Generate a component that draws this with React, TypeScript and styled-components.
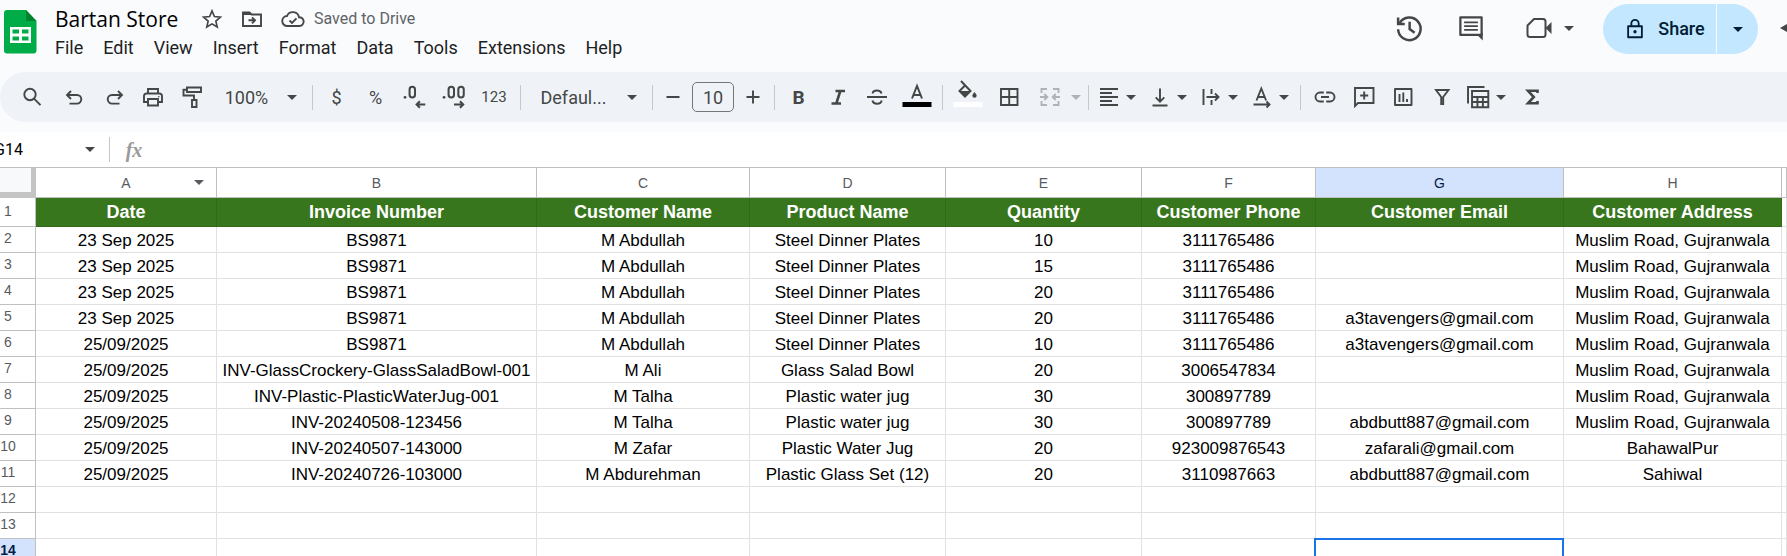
import React, { ReactNode } from 'react';
import styled, { createGlobalStyle, css } from 'styled-components';

const GlobalStyle = createGlobalStyle`
  *, *::before, *::after { box-sizing: border-box; }
  html, body { margin: 0; padding: 0; background: #f9fbfd; }
  body { overflow: hidden; font-family: Roboto, "Liberation Sans", sans-serif; color: #1f1f1f; }
  button, input { font: inherit; color: inherit; }
`;

const INK = '#444746';

/* ---------- layout ---------- */

const Page = styled.div`
  min-height: 100vh;
  max-height: 100vh;
  overflow: hidden;
  background: #f9fbfd;
`;

const Header = styled.header`
  display: flex;
  align-items: flex-start;
  height: 72px;
  padding-left: 4px;
  overflow: hidden;
`;

const LogoLink = styled.a`
  display: flex;
  padding-top: 10px;
`;

const TitleBlock = styled.div`
  margin-left: 18px;
`;

const TitleRow = styled.div`
  display: flex;
  align-items: center;
  height: 38px;
`;

const Title = styled.h1`
  margin: 0;
  min-width: 124px;
  font-size: 21px;
  line-height: 28px;
  font-weight: 400;
  font-family: "Open Sans", sans-serif;
  color: #000;
`;

const TitleIcons = styled.div`
  display: flex;
  gap: 17px;
  margin-left: 22px;
  color: ${INK};
`;

const Saved = styled.span`
  margin-left: 9px;
  font-size: 16px;
  line-height: 20px;
  color: #5f6368;
`;

const MenuBar = styled.nav`
  display: flex;
  gap: 20px;
`;

const MenuButton = styled.button`
  padding: 0;
  border: 0;
  background: none;
  font-size: 18px;
  line-height: 20px;
  color: #1f1f1f;
`;

const HeaderActions = styled.div`
  display: flex;
  align-items: center;
  margin-left: auto;
  height: 56px;
  flex: none;
  color: ${INK};
`;

const PlainButton = styled.button<{ $w?: number }>`
  display: flex;
  align-items: center;
  justify-content: center;
  flex: none;
  width: ${(p) => (p.$w ? `${p.$w}px` : 'auto')};
  padding: 0;
  border: 0;
  background: none;
`;

const ShareGroup = styled.div`
  display: flex;
  height: 50px;
  margin: 2px 22px 0 29px;
  border-radius: 25px;
  overflow: hidden;
  gap: 1px;
`;

const ShareButton = styled.button<{ $w: number; $lead?: number }>`
  display: flex;
  align-items: center;
  justify-content: center;
  gap: 12px;
  width: ${(p) => p.$w}px;
  padding: 0 0 0 ${(p) => p.$lead ?? 0}px;
  border: 0;
  background: #c2e7ff;
  color: #001d35;
  font-size: 18px;
  font-weight: 500;
  line-height: 24px;
`;

const Toolbar = styled.div`
  display: flex;
  align-items: center;
  height: 50px;
  padding-left: 12px;
  border-radius: 25px 0 0 25px;
  background: #eff3f8;
  color: ${INK};
  overflow: hidden;
`;

const ToolGroup = styled.div`
  display: flex;
  flex: none;
  gap: 7px;
`;

const SplitTool = styled.div`
  display: flex;
`;

const Tool = styled.button<{ $w?: number; $size?: number; $weight?: number; $faded?: boolean }>`
  display: flex;
  align-items: center;
  justify-content: center;
  flex: none;
  width: ${(p) => p.$w ?? 39}px;
  height: 38px;
  padding: 0;
  border: 0;
  background: none;
  color: ${(p) => (p.$faded ? '#b0b3b5' : INK)};
  font-size: ${(p) => p.$size ?? 18}px;
  font-weight: ${(p) => p.$weight ?? 400};
`;

const Divider = styled.span<{ $roomy?: boolean }>`
  flex: none;
  width: 1px;
  height: 25px;
  margin: 0 4px 0 ${(p) => (p.$roomy ? 10 : 5)}px;
  background: #c7c7c7;
`;

const SizeInput = styled.input`
  flex: none;
  width: 42px;
  height: 30px;
  margin: 0 3px;
  padding: 0;
  border: 1px solid #747775;
  border-radius: 5px;
  background: none;
  text-align: center;
  font-size: 18px;
  color: ${INK};
`;

const FormulaBar = styled.div`
  display: flex;
  align-items: center;
  height: 36px;
  margin-top: 10px;
  background: #fff;
  border-bottom: 1px solid #c0c0c0;
  color: ${INK};
`;

const NameBox = styled.input`
  width: 82px;
  margin-left: -6px;
  padding: 0;
  border: 0;
  background: none;
  font-size: 16px;
  color: #000;
`;

const FxLabel = styled.label`
  width: 40px;
  text-align: center;
  font-family: "Liberation Serif", serif;
  font-style: italic;
  font-weight: 700;
  font-size: 20px;
  line-height: 24px;
  color: #9a9a9a;
`;

const FormulaInput = styled.input`
  flex: 1;
  min-width: 0;
  border: 0;
  background: none;
`;

/* ---------- sheet ---------- */

const Sheet = styled.table`
  width: 100%;
  table-layout: fixed;
  border-collapse: separate;
  border-spacing: 0;
  background: #fff;
  font-family: "Liberation Sans", Arial, sans-serif;
`;

const Col = styled.col<{ $w?: number }>`
  width: ${(p) => (p.$w ? `${p.$w}px` : 'auto')};
`;

const Corner = styled.td`
  height: 30px;
  padding: 0;
  background: #f8f9fa;
  border-right: 5px solid #c4c4c4;
  border-bottom: 6px solid #c4c4c4;
`;

const ColumnHead = styled.th<{ $active?: boolean }>`
  position: relative;
  height: 30px;
  padding: 0;
  border-right: 1px solid #c0c0c0;
  border-bottom: 1px solid #c0c0c0;
  background: ${(p) => (p.$active ? '#d3e3fd' : '#fff')};
  color: ${(p) => (p.$active ? '#041e49' : '#575b5f')};
  font-size: 14px;
  font-weight: 400;
`;

const ColumnMenu = styled.button`
  position: absolute;
  top: 12px;
  right: 12px;
  display: flex;
  padding: 0;
  border: 0;
  background: none;
`;

const RowHead = styled.th<{ $active?: boolean }>`
  height: 26px;
  padding: 0 19px 3px 0;
  border-right: 1px solid #c0c0c0;
  border-bottom: 1px solid #c0c0c0;
  background: ${(p) => (p.$active ? '#d3e3fd' : '#fff')};
  color: ${(p) => (p.$active ? '#041e49' : '#575b5f')};
  font-size: 14px;
  line-height: 20px;
  font-weight: ${(p) => (p.$active ? 700 : 400)};
  text-align: center;
  white-space: nowrap;
`;

const Cell = styled.td<{ $head?: boolean; $selected?: boolean }>`
  height: 26px;
  padding: 2px 0 0;
  border-right: 1px solid #e1e1e1;
  border-bottom: 1px solid #e1e1e1;
  color: #000;
  font-size: 17px;
  line-height: 20px;
  text-align: center;
  white-space: nowrap;
  ${(p) =>
    p.$head &&
    css`
      height: 29px;
      padding: 0;
      border-color: #316a1b;
      background: #38761d;
      color: #fff;
      font-size: 18px;
      font-weight: 700;
    `}
  ${(p) =>
    p.$selected &&
    css`
      border-right-color: #1a73e8;
      box-shadow: -2px -1px 0 #1a73e8, 0 -1px 0 #1a73e8, inset -1px 1px 0 #1a73e8;
    `}
`;

/* ---------- icons ---------- */

const Svg = ({ size = 24, children, w = 2 }: { size?: number; children: ReactNode; w?: number }) => (
  <svg width={size} height={size} viewBox="0 0 24 24" fill="none" stroke="currentColor" strokeWidth={w} aria-hidden="true">
    {children}
  </svg>
);

const Caret = () => (
  <svg width="10" height="5" viewBox="0 0 10 5" fill="currentColor" aria-hidden="true">
    <path d="M0 0h10L5 5z" />
  </svg>
);

const SheetsLogo = () => (
  <svg width="33" height="44" viewBox="0 0 33 44" aria-hidden="true">
    <path d="M3 0h19l10.500 11v29.500a3 3 0 0 1-3 3H3a3 3 0 0 1-3-3V3a3 3 0 0 1 3-3z" fill="#00ac47" />
    <path d="M22 0l10.500 11H22z" fill="#00832d" />
    <path d="M6 17h21v16H6zM8.500 19.500v4H15v-4zM18 19.500v4h6.500v-4zM8.500 26.500v4H15v-4zM18 26.500v4h6.500v-4z" fill="#fff" fillRule="evenodd" />
  </svg>
);

const icons = {
  star: <Svg size={22} w={1.8}><path d="M12 3.200l2.600 6.100 6.600.6-5 4.400 1.500 6.500-5.700-3.500-5.700 3.500 1.500-6.500-5-4.400 6.600-.6z" /></Svg>,
  move: <Svg w={1.9}><path d="M3 5.500h6.500l2 2H21v11.500H3z" /><path d="M3 5h7l2 3H3z" fill="currentColor" stroke="none" /><path d="M8.500 13.300h6M12 10.300l3 3-3 3" /></Svg>,
  cloud: <Svg w={1.9}><path d="M6.500 19a5 5 0 0 1-.5-10A6.300 6.300 0 0 1 18 10.200 4.400 4.400 0 0 1 18.500 19z" /><path d="M8.500 13.500l2.500 2.500 4.500-4.700" /></Svg>,
  history: <Svg size={30}><path d="M4.600 8A9 9 0 1 1 3.300 13" /><path d="M3.300 3.500v5.300h5.300" /><path d="M12.500 7v5.800l4 3" /></Svg>,
  comment: <Svg size={30} w={1.8}><path d="M3.500 3.500h17v14h-17z" strokeLinejoin="round" /><path d="M21.400 16v6l-4-4z" fill="currentColor" stroke="none" /><path d="M6.500 7.500h11M6.500 10.500h11M6.500 13.500h11" strokeWidth="1.500" /></Svg>,
  search: <Svg w={1.9}><circle cx="10" cy="9.500" r="5.700" /><path d="M14 13.700l6.500 6.500" /></Svg>,
  undo: <Svg w={1.9}><path d="M9 6L5 10l4 4M5.500 10h9.500a4.300 4.300 0 0 1 0 8.600H7.500" /></Svg>,
  redo: <Svg w={1.9}><path d="M15 6l4 4-4 4M18.500 10H9a4.300 4.300 0 0 0 0 8.600h7.500" /></Svg>,
  print: <Svg w={1.9}><path d="M7 8.500V4h10v4.500" /><path d="M7 17H3V11a2.500 2.500 0 0 1 2.500-2.500h13A2.500 2.500 0 0 1 21 11v6h-4" /><path d="M7 14h10v6.500H7z" /><circle cx="17.800" cy="11.700" r=".8" fill="currentColor" stroke="none" /></Svg>,
  roller: <Svg w={1.9}><path d="M7 2.500h14V7H7z" /><path d="M7 4.700H3.500v5.800H14V15" /><path d="M12 15h4.500v7H12z" /></Svg>,
  decDown: <Svg size={26} w={1.9}><path d="M21.500 19h-8M16.500 16l-3 3 3 3" /><rect x="7" y="2.500" width="5" height="10" rx="2.500" /><circle cx="2.800" cy="12.300" r="1.300" fill="currentColor" stroke="none" /></Svg>,
  decUp: <Svg size={26} w={1.9}><path d="M12 19h8M17.500 16l3 3-3 3" /><rect x="7" y="2.500" width="5" height="10" rx="2.500" /><rect x="16" y="2.500" width="5" height="10" rx="2.500" /><circle cx="2.800" cy="12.300" r="1.300" fill="currentColor" stroke="none" /></Svg>,
  minus: <Svg w={1.9}><path d="M5.500 12h13" /></Svg>,
  plus: <Svg w={1.9}><path d="M5.500 12h13M12 5.500v13" /></Svg>,
  italic: <Svg w={2.6}><path d="M9.500 6H19M5.500 18.500H15M14.300 6l-4 12.500" /></Svg>,
  strike: <Svg><path d="M2 12h20" /><path d="M16.500 8.500c-.5-2-2-3-4.500-3s-4.300 1.200-4.300 3M7.500 15.500c.4 2.200 2 3.200 4.600 3.200s4.600-1.200 4.400-3.200" /></Svg>,
  borders: <Svg w={1.9}><path d="M4 4h16.500v16H4zM12.200 4v16M4 12h16.500" /></Svg>,
  merge: <Svg w={1.9}><path d="M9 4H3.500v4M15 4h5.500v4M9 20H3.500v-4M15 20h5.500v-4" /><path d="M2 12h7M6.300 9L9.300 12l-3 3M22 12h-7M17.700 9L14.700 12l3 3" /></Svg>,
  align: <Svg w={1.9}><path d="M3 4h18M3 8h12M3 12h18M3 16h12M3 20h18" /></Svg>,
  valign: <Svg w={1.9}><path d="M4.500 20.500h15M12 3.500v13M7.700 12.300L12 16.600l4.300-4.300" /></Svg>,
  wrap: <Svg w={1.9}><path d="M4.500 4v16M12.500 4v5M12.500 15v5M7.500 12h11M16 8.500l3.500 3.500-3.500 3.500" /></Svg>,
  rotate: <Svg w={1.9}><path d="M6.500 15.500l4.800-12 4.800 12M8 12h6.500M3.500 19.500h15M16.500 16.500l3 3-3 3" /></Svg>,
  link: <Svg w={1.9}><path d="M10.800 7.500H7a4.500 4.500 0 0 0 0 9h3.800M13.200 7.500H17a4.500 4.500 0 0 1 0 9h-3.800M8 12h8" /></Svg>,
  addComment: <Svg w={1.9}><path d="M3 21V3h18.500v15H6z" /><path d="M12.200 6.500v8M8.200 10.500h8" /></Svg>,
  chart: <Svg w={1.9}><path d="M4 4h16.500v16H4z" strokeLinejoin="round" /><path d="M8.500 9v8M12.300 7.500V17M16 14v3" /></Svg>,
  filter: <Svg w={1.9}><path d="M6 5h12.500L13.200 12v7h-2v-7z" /></Svg>,
  tableViews: <Svg size={26} w={1.8}><path d="M2.800 18V2.800H18" /><path d="M6.500 6.500h15v15h-15zM6.500 12h15M6.500 16.700h15M11.500 12v9.500M16.500 12v9.500" /></Svg>,
  sigma: <Svg w={2.6}><path d="M17.500 8V5.800H8l5.800 6.200L8 18.300h9.500V16" /></Svg>,
  lock: <Svg size={22}><path d="M4.500 9h15v12h-15z" strokeLinejoin="round" /><path d="M8 9V6a4 4 0 0 1 8 0v3" /><circle cx="12" cy="15" r="1.800" fill="currentColor" stroke="none" /></Svg>,
};

const VideoIcon = () => (
  <svg width="26" height="22" viewBox="0 0 26 22" fill="none" stroke="currentColor" strokeWidth="2" aria-hidden="true">
    <path d="M8 2h9a2.500 2.500 0 0 1 2.500 2.500v13A2.500 2.500 0 0 1 17 20H4a2.500 2.500 0 0 1-2.500-2.500V8.500z" strokeLinejoin="round" />
    <path d="M19.500 11L25.500 5v12z" fill="currentColor" stroke="none" />
  </svg>
);

const TextColorIcon = () => (
  <svg width="30" height="30" viewBox="0 0 30 30" fill="none" stroke="currentColor" strokeWidth="2" aria-hidden="true">
    <path d="M10 16.500L15 4l5 12.500M11.500 13h7" />
    <path d="M.5 20h29v5H.5z" fill="#000" stroke="none" />
  </svg>
);

const FillColorIcon = () => (
  <svg width="30" height="38" viewBox="0 -4 30 38" fill="none" stroke="currentColor" strokeWidth="2" aria-hidden="true">
    <path d="M8-1l9.500 10-5.500 5.500L6.500 9 12 3.500" />
    <path d="M6 9h12l-6 6z" fill="currentColor" stroke="none" />
    <path d="M21.500 10c1.500 2 2.200 2.700 2.200 3.600a2.200 2.200 0 0 1-4.400 0c0-.9.700-1.600 2.200-3.600z" fill="currentColor" stroke="none" />
    <path d="M.5 20h29v5H.5z" fill="#fff" stroke="none" />
  </svg>
);

const MoreArrow = () => (
  <svg width="7" height="8" viewBox="0 0 7 8" aria-hidden="true">
    <path d="M0 4l7-4v8z" fill="currentColor" />
  </svg>
);

/* ---------- data ---------- */

const menus = ['File', 'Edit', 'View', 'Insert', 'Format', 'Data', 'Tools', 'Extensions', 'Help'];
const columns = ['A', 'B', 'C', 'D', 'E', 'F', 'G', 'H'];
const widths = [181, 320, 213, 196, 196, 174, 248, 218];

const layoutTools: [string, ReactNode][] = [
  ['Horizontal align', icons.align],
  ['Vertical align', icons.valign],
  ['Text wrapping', icons.wrap],
  ['Text rotation', icons.rotate],
];

const headings = [
  'Date', 'Invoice Number', 'Customer Name', 'Product Name',
  'Quantity', 'Customer Phone', 'Customer Email', 'Customer Address',
];
const road = 'Muslim Road, Gujranwala';
const rows: string[][] = [
  ['23 Sep 2025', 'BS9871', 'M Abdullah', 'Steel Dinner Plates', '10', '3111765486', '', road],
  ['23 Sep 2025', 'BS9871', 'M Abdullah', 'Steel Dinner Plates', '15', '3111765486', '', road],
  ['23 Sep 2025', 'BS9871', 'M Abdullah', 'Steel Dinner Plates', '20', '3111765486', '', road],
  ['23 Sep 2025', 'BS9871', 'M Abdullah', 'Steel Dinner Plates', '20', '3111765486', 'a3tavengers@gmail.com', road],
  ['25/09/2025', 'BS9871', 'M Abdullah', 'Steel Dinner Plates', '10', '3111765486', 'a3tavengers@gmail.com', road],
  ['25/09/2025', 'INV-GlassCrockery-GlassSaladBowl-001', 'M Ali', 'Glass Salad Bowl', '20', '3006547834', '', road],
  ['25/09/2025', 'INV-Plastic-PlasticWaterJug-001', 'M Talha', 'Plastic water jug', '30', '300897789', '', road],
  ['25/09/2025', 'INV-20240508-123456', 'M Talha', 'Plastic water jug', '30', '300897789', 'abdbutt887@gmail.com', road],
  ['25/09/2025', 'INV-20240507-143000', 'M Zafar', 'Plastic Water Jug', '20', '923009876543', 'zafarali@gmail.com', 'BahawalPur'],
  ['25/09/2025', 'INV-20240726-103000', 'M Abdurehman', 'Plastic Glass Set (12)', '20', '3110987663', 'abdbutt887@gmail.com', 'Sahiwal'],
  ...Array.from({ length: 3 }, () => Array(8).fill('')),
];

export default function App() {
  return (
    <Page>
      <GlobalStyle />
      <Header>
        <LogoLink href="#" aria-label="Sheets home"><SheetsLogo /></LogoLink>
        <TitleBlock>
          <TitleRow>
            <Title>Bartan Store</Title>
            <TitleIcons>
              <PlainButton aria-label="Star">{icons.star}</PlainButton>
              <PlainButton aria-label="Move">{icons.move}</PlainButton>
              <PlainButton aria-label="Document status">{icons.cloud}</PlainButton>
            </TitleIcons>
            <Saved>Saved to Drive</Saved>
          </TitleRow>
          <MenuBar>{menus.map((m) => <MenuButton key={m}>{m}</MenuButton>)}</MenuBar>
        </TitleBlock>
        <HeaderActions>
          <PlainButton $w={38} aria-label="Version history">{icons.history}</PlainButton>
          <PlainButton $w={86} aria-label="Comments">{icons.comment}</PlainButton>
          <PlainButton $w={50} aria-label="Video call"><VideoIcon /></PlainButton>
          <PlainButton aria-label="Call options"><Caret /></PlainButton>
          <ShareGroup>
            <ShareButton $w={113} $lead={10}>{icons.lock}Share</ShareButton>
            <ShareButton $w={41} aria-label="Share options"><Caret /></ShareButton>
          </ShareGroup>
          <PlainButton aria-label="More"><MoreArrow /></PlainButton>
        </HeaderActions>
      </Header>

      <Toolbar role="toolbar" aria-label="Formatting">
        <Tool aria-label="Search">{icons.search}</Tool>
        <Tool $w={45} aria-label="Undo">{icons.undo}</Tool>
        <Tool $w={37} aria-label="Redo">{icons.redo}</Tool>
        <Tool aria-label="Print">{icons.print}</Tool>
        <Tool aria-label="Paint format">{icons.roller}</Tool>
        <Tool $w={71}>100%</Tool>
        <Tool $w={20} aria-label="Zoom options"><Caret /></Tool>
        <Divider $roomy />
        <Tool>$</Tool>
        <Tool>%</Tool>
        <Tool aria-label="Decrease decimal places">{icons.decDown}</Tool>
        <Tool aria-label="Increase decimal places">{icons.decUp}</Tool>
        <Tool $w={42} $size={15}>123</Tool>
        <Divider />
        <Tool $w={97}>Defaul...</Tool>
        <Tool $w={20} aria-label="Fonts"><Caret /></Tool>
        <Divider $roomy />
        <Tool $w={32} aria-label="Decrease font size">{icons.minus}</Tool>
        <SizeInput aria-label="Font size" defaultValue="10" />
        <Tool $w={32} aria-label="Increase font size">{icons.plus}</Tool>
        <Divider />
        <Tool $size={19} $weight={700}>B</Tool>
        <Tool aria-label="Italic">{icons.italic}</Tool>
        <Tool aria-label="Strikethrough">{icons.strike}</Tool>
        <Tool $w={41} aria-label="Text color"><TextColorIcon /></Tool>
        <Divider />
        <Tool $w={41} aria-label="Fill color"><FillColorIcon /></Tool>
        <Tool $w={42} aria-label="Borders">{icons.borders}</Tool>
        <Tool $faded aria-label="Merge cells">{icons.merge}</Tool>
        <Tool $faded $w={14} aria-label="Merge options"><Caret /></Tool>
        <Divider />
        <ToolGroup>
          {layoutTools.map(([name, icon]) => (
            <SplitTool key={name}>
              <Tool $w={32} aria-label={name}>{icon}</Tool>
              <Tool $w={12} aria-label={`${name} options`}><Caret /></Tool>
            </SplitTool>
          ))}
        </ToolGroup>
        <Divider $roomy />
        <Tool aria-label="Insert link">{icons.link}</Tool>
        <Tool aria-label="Insert comment">{icons.addComment}</Tool>
        <Tool aria-label="Insert chart">{icons.chart}</Tool>
        <Tool aria-label="Create a filter">{icons.filter}</Tool>
        <Tool $w={34} aria-label="Table views">{icons.tableViews}</Tool>
        <Tool $w={12} aria-label="Table view options"><Caret /></Tool>
        <Tool $w={50} aria-label="Functions">{icons.sigma}</Tool>
      </Toolbar>

      <FormulaBar>
        <NameBox aria-label="Name box" defaultValue="G14" />
        <PlainButton $w={28} aria-label="Named ranges"><Caret /></PlainButton>
        <Divider />
        <FxLabel htmlFor="formula">fx</FxLabel>
        <FormulaInput id="formula" />
      </FormulaBar>

      <Sheet>
        <colgroup>
          <Col $w={36} />
          {widths.map((w, i) => <Col key={i} $w={w} />)}
          <Col />
        </colgroup>
        <thead>
          <tr>
            <Corner />
            {columns.map((c) => (
              <ColumnHead key={c} scope="col" $active={c === 'G'}>
                {c}
                {c === 'A' && <ColumnMenu aria-label="Column menu"><Caret /></ColumnMenu>}
              </ColumnHead>
            ))}
            <ColumnHead scope="col" />
          </tr>
        </thead>
        <tbody>
          <tr>
            <RowHead scope="row">1</RowHead>
            {headings.map((h) => <Cell key={h} $head>{h}</Cell>)}
            <Cell />
          </tr>
          {rows.map((r, i) => (
            <tr key={i}>
              <RowHead scope="row" $active={i === 12}>{i + 2}</RowHead>
              {r.map((v, j) => <Cell key={j} $selected={i === 12 && j === 6}>{v}</Cell>)}
              <Cell />
            </tr>
          ))}
        </tbody>
      </Sheet>
    </Page>
  );
}
